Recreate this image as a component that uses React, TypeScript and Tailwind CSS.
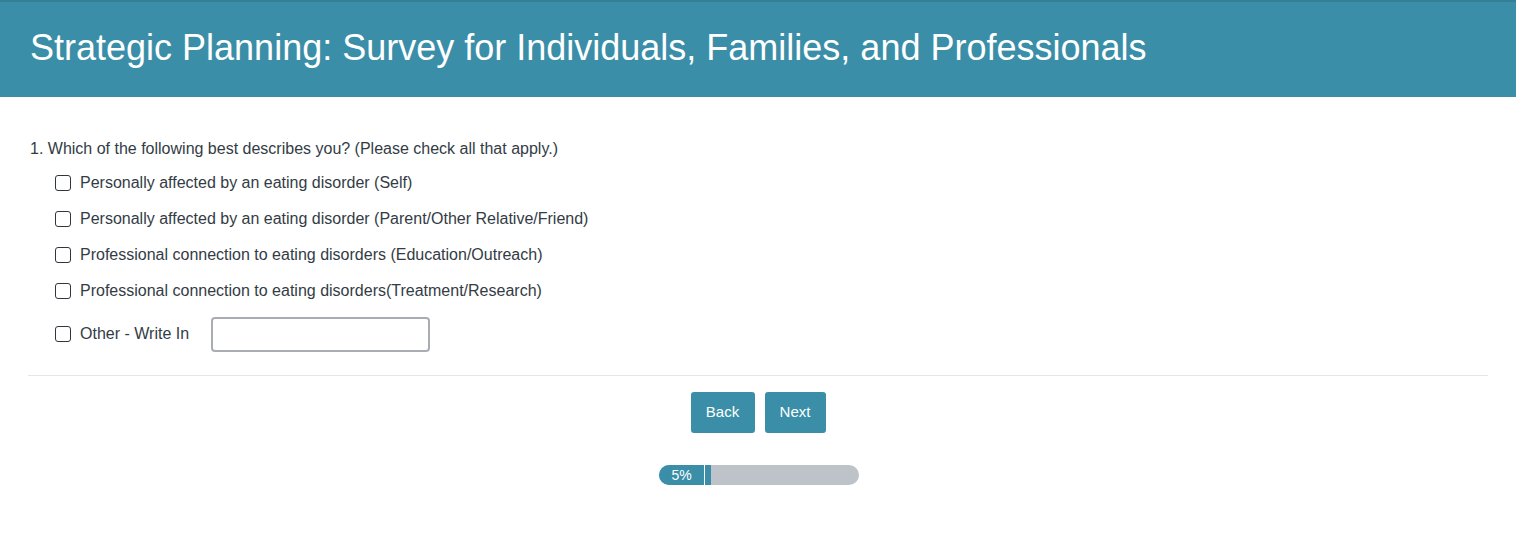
import { useState } from "react";

const options = [
    "Personally affected by an eating disorder (Self)",
    "Personally affected by an eating disorder (Parent/Other Relative/Friend)",
    "Professional connection to eating disorders (Education/Outreach)",
    "Professional connection to eating disorders(Treatment/Research)",
];

const Box = () => (
    <span className="inline-block h-[16px] w-[16px] shrink-0 rounded-[3px] border-[1.5px] border-[#2f3640] bg-white" />
);

const App = () => {
    const [other, setOther] = useState("");

    return (
        <div className="min-h-[547px] bg-white font-[Liberation_Sans,Arial,sans-serif] text-[#333c45]">
            <header className="h-[97px] border-t-[2px] border-[#357f96] bg-[#3a8ea8] pl-[30px] pt-[24px]">
                <h1 className="text-[36px] leading-[44px] text-white">Strategic Planning: Survey for Individuals, Families, and Professionals</h1>
            </header>

            <main className="px-[28px] pt-[42px]">
                <p className="pl-[2px] text-[16px] leading-[20px]">1. Which of the following best describes you? (Please check all that apply.)</p>
                <div className="mt-[6px] flex flex-col pl-[27px]">
                    {options.map((o) => (
                        <label key={o} className="flex h-[36px] items-center gap-[9px] text-[16px]">
                            <Box />
                            <span>{o}</span>
                        </label>
                    ))}
                    <label className="flex h-[50px] items-center gap-[9px] text-[16px]">
                        <Box />
                        <span>Other - Write In</span>
                        <input
                            className="ml-[13px] h-[35px] w-[219px] rounded-[4px] border-2 border-[#a9adb3] px-2 outline-none"
                            value={other}
                            onChange={(e) => setOther(e.target.value)}
                        />
                    </label>
                </div>

                <div className="mt-[16px] h-px w-full bg-[#e6e6e6]" />

                <div className="mt-[16px] flex justify-center gap-[10px]">
                    <button className="h-[41px] w-[64px] rounded-[3px] bg-[#3a8ea8] text-[15px] text-white">Back</button>
                    <button className="h-[41px] w-[61px] rounded-[3px] bg-[#3a8ea8] text-[15px] text-white">Next</button>
                </div>

                <div className="mt-[32px] flex justify-center pl-[2px]">
                    <div className="flex h-[20px] w-[200px] overflow-hidden rounded-full bg-[#bec3c9]">
                        <div className="flex w-[45px] items-center justify-center bg-[#3a8ea8] text-[14px] text-white">5%</div>
                        <div className="w-px bg-white" />
                        <div className="w-[6px] bg-[#3a8ea8]" />
                    </div>
                </div>
            </main>
        </div>
    );
};

export default App;
